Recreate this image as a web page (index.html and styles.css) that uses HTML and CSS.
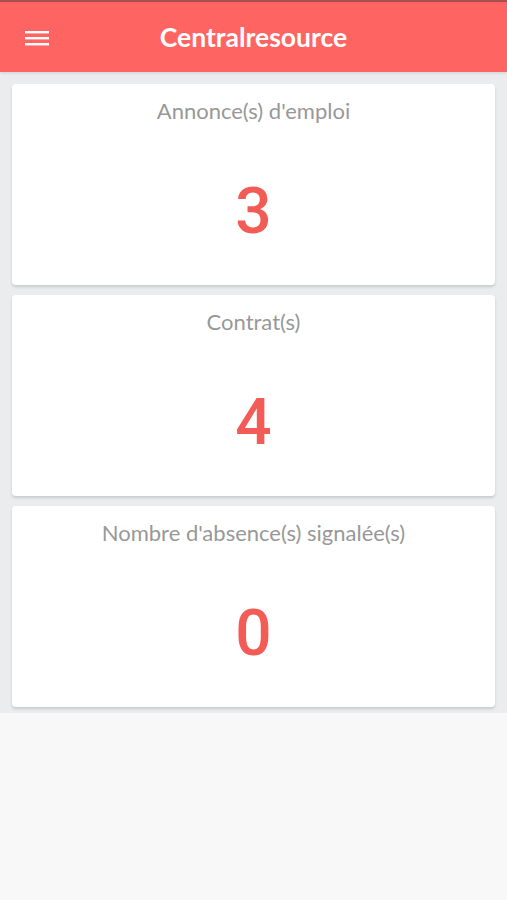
FILE: index.html
```html
<!DOCTYPE html>
<html lang="fr">

<head>
    <meta charset="UTF-8">
    <meta name="viewport" content="width=device-width, initial-scale=1.0">
    <title>Centralresource</title>
    <link rel="stylesheet" href="styles.css">
</head>

<body>
    <header class="topbar">
        <button class="menu-btn" type="button" aria-label="Menu">
            <svg width="24" height="16" viewBox="0 0 24 16">
                <rect x="0" y="1" width="24" height="2.4" fill="#fff" />
                <rect x="0" y="7" width="24" height="2.4" fill="#fff" />
                <rect x="0" y="13" width="24" height="2.4" fill="#fff" />
            </svg>
        </button>
        <h1 class="topbar-title">Centralresource</h1>
    </header>

    <main class="dashboard">
        <div class="stat-card">
            <div class="stat-label">Annonce(s) d'emploi</div>
            <div class="stat-value">3</div>
        </div>
        <div class="stat-card">
            <div class="stat-label">Contrat(s)</div>
            <div class="stat-value">4</div>
        </div>
        <div class="stat-card">
            <div class="stat-label">Nombre d'absence(s) signalée(s)</div>
            <div class="stat-value">0</div>
        </div>
    </main>
</body>

</html>
```

FILE: styles.css
```css
body {
    margin: 0;
    background-color: #f8f8f8;
    font-family: Lato, "Noto Sans", sans-serif;
}

.topbar {
    position: relative;
    height: 70px;
    border-top: 2px solid #a9504e;
    background-color: #fe6461;
    display: flex;
    align-items: center;
    justify-content: center;
    box-shadow: 0 1px 3px rgba(0, 0, 0, 0.12);
    z-index: 1;
}

.menu-btn {
    position: absolute;
    left: 25px;
    top: 28px;
    padding: 0;
    border: none;
    background: none;
    line-height: 0;
}

.topbar-title {
    margin: 0;
    color: white;
    font-size: 26.5px;
    font-weight: 700;
}

.dashboard {
    background-color: #ebeced;
    padding: 12px 12px 6px;
    display: flex;
    flex-direction: column;
    gap: 10px;
}

.stat-card {
    background-color: white;
    border-radius: 4px;
    height: 201px;
    box-sizing: border-box;
    padding-top: 13px;
    box-shadow: 0 2px 3px rgba(0, 0, 0, 0.14);
    text-align: center;
}

.stat-label {
    color: #989898;
    font-size: 22px;
    line-height: 28px;
}

.stat-value {
    margin-top: 51px;
    color: #f35b56;
    font-family: Roboto, "Liberation Sans", sans-serif;
    font-weight: 500;
    font-size: 64px;
    line-height: 72px;
}
```
